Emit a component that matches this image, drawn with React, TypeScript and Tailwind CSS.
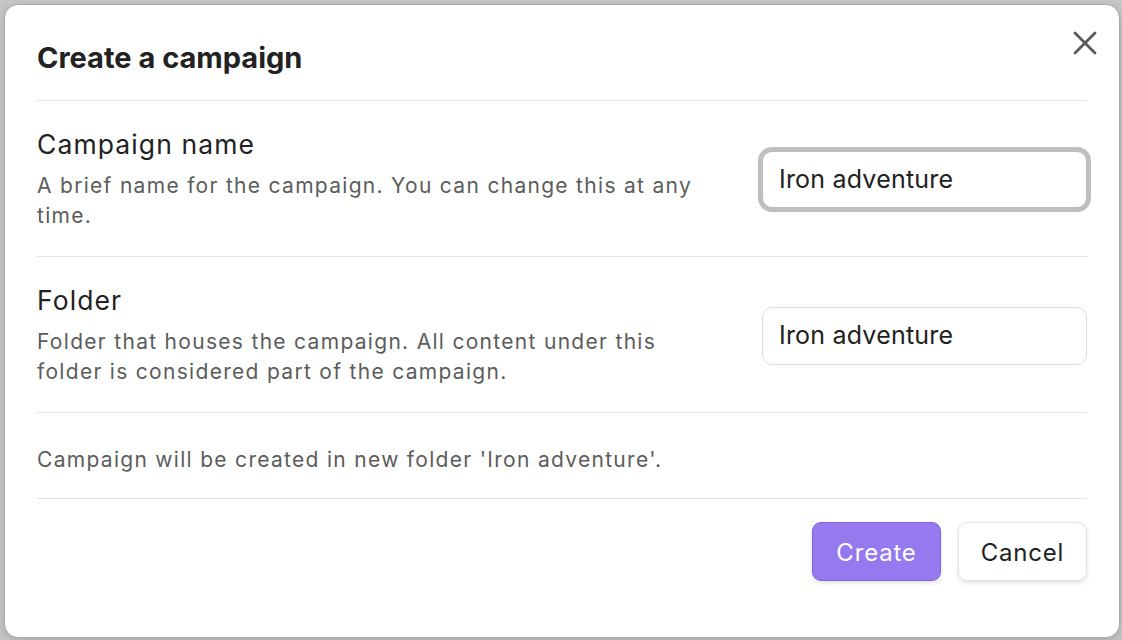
import React from "react";

function CloseIcon() {
  return (
    <svg width="24" height="24" viewBox="0 0 24 24" fill="none">
      <path d="M2 2L22 22M22 2L2 22" stroke="#5a5a5a" strokeWidth="2.8" strokeLinecap="round" />
    </svg>
  );
}

function Setting({
  name,
  desc,
  value,
  focused,
}: {
  name: string;
  desc: string;
  value: string;
  focused?: boolean;
}) {
  return (
    <div className="flex items-center justify-between pt-[27px] pb-[25px]">
      <div className="w-[675px] flex flex-col gap-[11px]">
        <div className="text-[26.5px] leading-[32px] tracking-[1.1px] text-[#222222]">{name}</div>
        <div className="text-[21px] leading-[30px] tracking-[1.3px] text-[#5c5c5c]">{desc}</div>
      </div>
      <div
        className={
          focused
            ? "w-[325px] h-[57px] rounded-[10px] border border-[#bcbcbc] shadow-[0_0_0_4px_#bfbfbf] bg-white flex items-center pl-[16px] text-[25px] tracking-[0.2px] text-[#222222]"
            : "w-[325px] h-[58px] rounded-[10px] border border-[#dedede] bg-white flex items-center pl-[16px] text-[25px] tracking-[0.2px] text-[#222222]"
        }
      >
        {value}
      </div>
    </div>
  );
}

export default function App() {
  return (
    <div
      className="w-[1122px] h-[640px] bg-[#c6c6c6] pt-[4px] pl-[4px] pr-[2px] pb-[2px] flex"
      style={{ fontFamily: "Inter, 'Noto Sans', sans-serif" }}
    >
      <div className="flex-1 relative bg-white rounded-[14px] border border-[#a9a9a9] shadow-[0_2px_8px_rgba(0,0,0,0.15)] flex flex-col px-[32px]">
        <button className="absolute top-[26px] right-[22px] w-[24px] h-[24px] flex items-center justify-center">
          <CloseIcon />
        </button>
        <div className="pt-[35px] pb-[24px] text-[29px] leading-[36px] font-bold text-[#222222]">
          Create a campaign
        </div>
        <div className="h-px bg-[#e2e2e2]" />
        <Setting
          name="Campaign name"
          desc="A brief name for the campaign. You can change this at any time."
          value="Iron adventure"
          focused
        />
        <div className="h-px bg-[#e2e2e2]" />
        <Setting
          name="Folder"
          desc="Folder that houses the campaign. All content under this folder is considered part of the campaign."
          value="Iron adventure"
        />
        <div className="h-px bg-[#e2e2e2]" />
        <div className="pt-[32px] pb-[23px] text-[21px] leading-[30px] tracking-[1.3px] text-[#5c5c5c]">
          Campaign will be created in new folder 'Iron adventure'.
        </div>
        <div className="h-px bg-[#e2e2e2]" />
        <div className="flex justify-end gap-[17px] pt-[23px]">
          <button className="w-[129px] h-[59px] rounded-[9px] bg-[#9479ef] border border-[#8064db] shadow-[0_2px_4px_rgba(0,0,0,0.12)] text-white text-[24px] tracking-[0.8px] pt-[3px]">
            Create
          </button>
          <button className="w-[129px] h-[59px] rounded-[9px] bg-white border border-[#e4e4e4] shadow-[0_2px_4px_rgba(0,0,0,0.12)] text-[#222222] text-[24px] tracking-[0.8px] pt-[3px]">
            Cancel
          </button>
        </div>
      </div>
    </div>
  );
}
